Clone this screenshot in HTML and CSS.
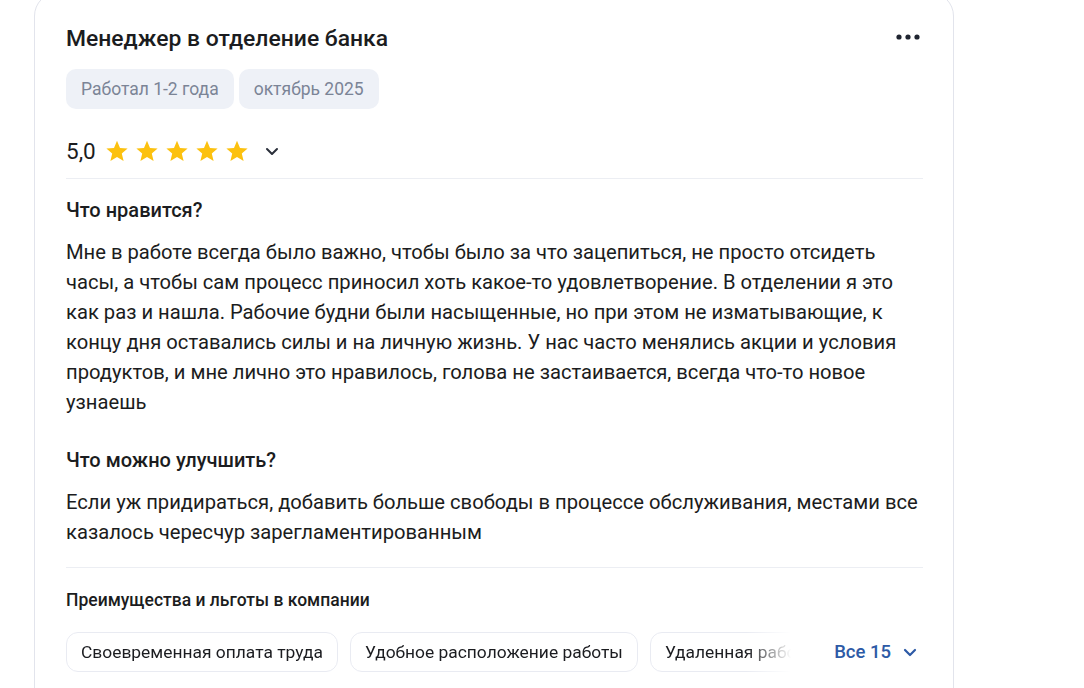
FILE: index.html
```html
<!DOCTYPE html>
<html lang="ru">
<head>
<meta charset="utf-8">
<link rel="stylesheet" href="styles.css">
</head>
<body>
<div class="card">
  <div class="head">
    <h1 class="title">Менеджер в отделение банка</h1>
    <button class="more" aria-label="Ещё">
      <svg width="24" height="6" viewBox="0 0 24 6"><circle cx="3" cy="3" r="2.6" fill="#1f2430"/><circle cx="12" cy="3" r="2.6" fill="#1f2430"/><circle cx="21" cy="3" r="2.6" fill="#1f2430"/></svg>
    </button>
  </div>
  <div class="tags">
    <span class="tag">Работал 1-2 года</span>
    <span class="tag">октябрь 2025</span>
  </div>
  <div class="rating">
    <span class="score">5,0</span>
    <span class="stars">
      <svg class="star" viewBox="0 0 24 24"><path d="M12 1.8l3 7.1 7.6.6-5.8 5 1.8 7.5L12 18l-6.6 4 1.8-7.5-5.8-5 7.6-.6z" fill="#fcc10f"/></svg>
      <svg class="star" viewBox="0 0 24 24"><path d="M12 1.8l3 7.1 7.6.6-5.8 5 1.8 7.5L12 18l-6.6 4 1.8-7.5-5.8-5 7.6-.6z" fill="#fcc10f"/></svg>
      <svg class="star" viewBox="0 0 24 24"><path d="M12 1.8l3 7.1 7.6.6-5.8 5 1.8 7.5L12 18l-6.6 4 1.8-7.5-5.8-5 7.6-.6z" fill="#fcc10f"/></svg>
      <svg class="star" viewBox="0 0 24 24"><path d="M12 1.8l3 7.1 7.6.6-5.8 5 1.8 7.5L12 18l-6.6 4 1.8-7.5-5.8-5 7.6-.6z" fill="#fcc10f"/></svg>
      <svg class="star" viewBox="0 0 24 24"><path d="M12 1.8l3 7.1 7.6.6-5.8 5 1.8 7.5L12 18l-6.6 4 1.8-7.5-5.8-5 7.6-.6z" fill="#fcc10f"/></svg>
    </span>
    <svg class="chev" width="14" height="9" viewBox="0 0 14 9"><path d="M2 2l5 5 5-5" fill="none" stroke="#2a2f3a" stroke-width="2" stroke-linecap="round" stroke-linejoin="round"/></svg>
  </div>
  <div class="divider"></div>
  <h2 class="sec-title">Что нравится?</h2>
  <p class="text">Мне в работе всегда было важно, чтобы было за что зацепиться, не просто отсидеть часы, а чтобы сам процесс приносил хоть какое-то удовлетворение. В отделении я это как раз и нашла. Рабочие будни были насыщенные, но при этом не изматывающие, к концу дня оставались силы и на личную жизнь. У нас часто менялись акции и условия продуктов, и мне лично это нравилось, голова не застаивается, всегда что-то новое узнаешь</p>
  <h2 class="sec-title second">Что можно улучшить?</h2>
  <p class="text">Если уж придираться, добавить больше свободы в процессе обслуживания, местами все казалось чересчур зарегламентированным</p>
  <div class="divider lower"></div>
  <h3 class="benefits-title">Преимущества и льготы в компании</h3>
  <div class="benefits">
    <div class="chips">
      <span class="chip">Своевременная оплата труда</span>
      <span class="chip">Удобное расположение работы</span>
      <span class="chip">Удаленная работа</span>
    </div>
    <button class="all">Все 15
      <svg width="14" height="9" viewBox="0 0 14 9"><path d="M2 2l5 5 5-5" fill="none" stroke="#2d5aa6" stroke-width="2.2" stroke-linecap="round" stroke-linejoin="round"/></svg>
    </button>
  </div>
</div>
</body>
</html>
```
FILE: styles.css
```css
* { box-sizing: border-box; }
html, body { margin: 0; padding: 0; background: #fff; }
body {
  font-family: Roboto, "Noto Sans", "Liberation Sans", sans-serif;
  color: #1b1c20;
  overflow: hidden;
  height: 688px;
}
.card {
  margin: -8px 0 0 34px;
  width: 920px;
  min-height: 760px;
  border: 1px solid #e2e4ec;
  border-radius: 24px;
  padding: 31px 30px 0 31px;
}
.head {
  display: flex;
  justify-content: space-between;
  align-items: flex-start;
}
.title {
  margin: 0;
  font-size: 22.9px;
  line-height: 30px;
  font-weight: 500;
  color: #1b1c20;
}
.more {
  border: 0;
  background: none;
  padding: 0;
  margin: 10px 3px 0 0;
  display: flex;
  cursor: pointer;
}
.tags {
  display: flex;
  gap: 5px;
  margin-top: 15px;
}
.tag {
  display: inline-flex;
  align-items: center;
  height: 40px;
  padding: 0 15px;
  background: #eef1f7;
  border-radius: 10px;
  color: #7b8496;
  font-size: 17.5px;
}
.rating {
  display: flex;
  align-items: center;
  height: 36px;
  margin-top: 24px;
}
.score {
  font-size: 22.5px;
  font-weight: 400;
  margin-right: 9px;
}
.stars { display: flex; gap: 6px; }
.star { width: 24px; height: 24px; display: block; }
.chev { margin-left: 16px; margin-top: 1px; }
.divider {
  height: 1px;
  background: #eceef3;
  margin-top: 9px;
}
.sec-title {
  margin: 19px 0 0;
  font-size: 20px;
  line-height: 24px;
  font-weight: 500;
}
.sec-title.second { margin-top: 31px; }
.text {
  margin: 15px 0 0;
  font-size: 20.2px;
  line-height: 30px;
  color: #1b1c20;
}
.divider.lower { margin-top: 20px; }
.benefits-title {
  margin: 20px 0 0;
  font-size: 17.5px;
  line-height: 24px;
  font-weight: 500;
}
.benefits {
  display: flex;
  align-items: center;
  margin-top: 20px;
}
.chips {
  flex: 1;
  display: flex;
  gap: 12px;
  overflow: hidden;
  -webkit-mask-image: linear-gradient(to right, #000 calc(100% - 45px), transparent 100%);
  mask-image: linear-gradient(to right, #000 calc(100% - 45px), transparent 100%);
}
.chip {
  flex: none;
  display: inline-flex;
  align-items: center;
  height: 40px;
  padding: 0 14px;
  border: 1px solid #e9ebf2;
  border-radius: 12px;
  font-size: 17.4px;
  color: #1b1c20;
  white-space: nowrap;
}
.all {
  flex: none;
  display: flex;
  align-items: center;
  gap: 12px;
  border: 0;
  background: none;
  padding: 0 6px 0 43px;
  font-family: inherit;
  font-size: 18.5px;
  font-weight: 500;
  color: #2d5aa6;
  cursor: pointer;
}
```
